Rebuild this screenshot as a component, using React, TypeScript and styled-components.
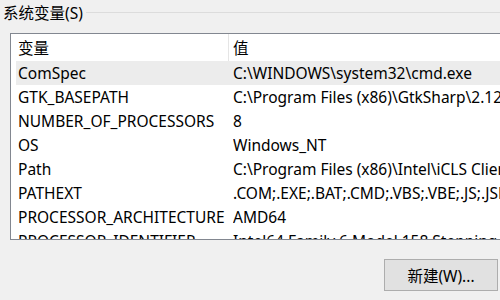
import React from 'react';
import styled, { createGlobalStyle } from 'styled-components';

const GlobalStyle = createGlobalStyle`
  html, body {
    margin: 0;
    padding: 0;
    background: #f0f0f0;
    overflow: hidden;
  }
  body {
    font-family: "Noto Sans", "Noto Sans CJK SC", sans-serif;
    font-size: 15.5px;
    color: #000;
  }
`;

const Page = styled.div`
  width: 500px;
  height: 300px;
  position: relative;
  overflow: hidden;
  background: #f0f0f0;
`;

const GroupTitle = styled.div`
  display: flex;
  align-items: center;
  height: 24px;
  padding-left: 3px;
  margin-top: 1px;
`;

const TitleText = styled.span`
  white-space: nowrap;
  line-height: 24px;
`;

const TitleLine = styled.div`
  flex: 1;
  height: 1px;
  background: #dcdcdc;
  margin-left: 3px;
  margin-top: -2px;
`;

const ListBox = styled.div`
  margin-top: 8px;
  margin-left: 10px;
  width: 620px;
  height: 207px;
  border: 1px solid #828790;
  background: #fff;
  overflow: hidden;
  box-sizing: border-box;
`;

const HeaderRow = styled.div`
  display: grid;
  grid-template-columns: 217px 1fr;
  height: 27px;
  align-items: center;
`;

const HeaderCell = styled.div<{ $divider?: boolean }>`
  height: 100%;
  display: flex;
  align-items: center;
  padding-left: ${(p) => (p.$divider ? '4px' : '7px')};
  border-left: ${(p) => (p.$divider ? '1px solid #e5e5e5' : 'none')};
  box-sizing: border-box;
`;

const Row = styled.div<{ $selected?: boolean }>`
  display: grid;
  grid-template-columns: 217px 1fr;
  height: 24px;
  align-items: center;
  margin-left: 5px;
  background: ${(p) => (p.$selected ? '#ececec' : 'transparent')};
  white-space: nowrap;
`;

const Cell = styled.div<{ $value?: boolean }>`
  padding-left: ${(p) => (p.$value ? '0px' : '2px')};
  overflow: hidden;
`;

const Footer = styled.div`
  display: flex;
  justify-content: flex-end;
  padding-right: 2px;
  margin-top: 19px;
`;

const Button = styled.div`
  width: 114px;
  height: 32px;
  box-sizing: border-box;
  border: 1px solid #adadad;
  background: #e1e1e1;
  display: flex;
  align-items: center;
  justify-content: center;
`;

const vars: [string, string][] = [
  ['ComSpec', 'C:\\WINDOWS\\system32\\cmd.exe'],
  ['GTK_BASEPATH', 'C:\\Program Files (x86)\\GtkSharp\\2.12\\'],
  ['NUMBER_OF_PROCESSORS', '8'],
  ['OS', 'Windows_NT'],
  ['Path', 'C:\\Program Files (x86)\\Intel\\iCLS Client\\;C:\\Program Files\\'],
  ['PATHEXT', '.COM;.EXE;.BAT;.CMD;.VBS;.VBE;.JS;.JSE;.WSF;.WSH;.MSC'],
  ['PROCESSOR_ARCHITECTURE', 'AMD64'],
  ['PROCESSOR_IDENTIFIER', 'Intel64 Family 6 Model 158 Stepping 9, GenuineIntel'],
];

export default function App() {
  return (
    <Page>
      <GlobalStyle />
      <GroupTitle>
        <TitleText>系统变量(S)</TitleText>
        <TitleLine />
      </GroupTitle>
      <ListBox>
        <HeaderRow>
          <HeaderCell>变量</HeaderCell>
          <HeaderCell $divider>值</HeaderCell>
        </HeaderRow>
        {vars.map(([k, v], i) => (
          <Row key={k} $selected={i === 0}>
            <Cell>{k}</Cell>
            <Cell $value>{v}</Cell>
          </Row>
        ))}
      </ListBox>
      <Footer>
        <Button>新建(W)...</Button>
      </Footer>
    </Page>
  );
}
